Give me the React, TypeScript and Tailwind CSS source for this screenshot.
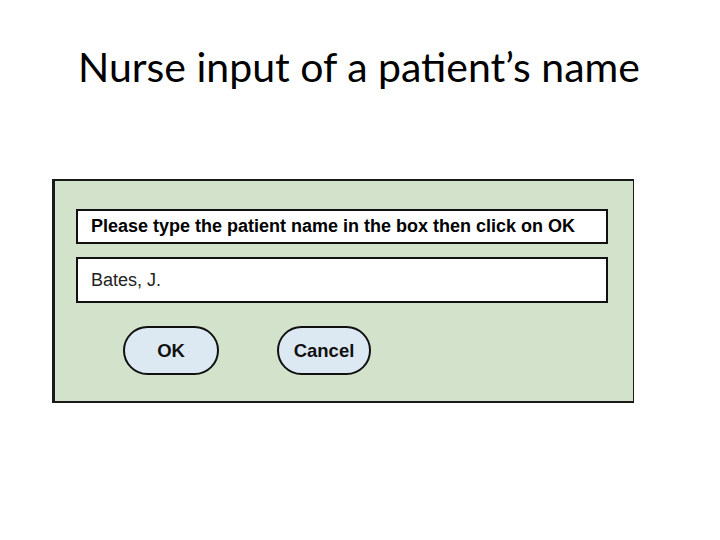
export default function App() {
  return (
    <div className="w-[720px] h-[540px] bg-white relative overflow-hidden">
      <h1
        className="pt-[42px] text-center text-[41px] leading-[50px] text-black pr-[2px]"
        style={{ fontFamily: "Lato, 'Open Sans', sans-serif" }}
      >
        Nurse input of a patient’s name
      </h1>

      <div
        className="ml-[52px] mt-[87px] w-[582px] h-[224px] bg-[#d3e3cb] border-l-[3px] border-t-2 border-r border-b-2 border-[#1a1a1a] pt-[28px] pl-[21px]"
        style={{ fontFamily: "'Liberation Sans', Arial, sans-serif" }}
      >
        <div className="w-[532px] h-[35px] bg-white border-2 border-[#111] flex items-center pl-[13px] text-[18px] font-bold text-black">
          Please type the patient name in the box then click on OK
        </div>
        <div className="mt-[13px] w-[532px] h-[46px] bg-white border-2 border-[#111] flex items-center pl-[13px] text-[18px] text-[#222]">
          Bates, J.
        </div>
        <div className="mt-[23px] flex gap-[58px] pl-[47px]">
          <button className="w-[96px] h-[49px] rounded-full border-2 border-[#111] bg-[#dde9f2] text-[18.5px] font-bold text-[#111]">
            OK
          </button>
          <button className="w-[94px] h-[49px] rounded-full border-2 border-[#111] bg-[#dde9f2] text-[18.5px] font-bold text-[#111]">
            Cancel
          </button>
        </div>
      </div>
    </div>
  );
}
